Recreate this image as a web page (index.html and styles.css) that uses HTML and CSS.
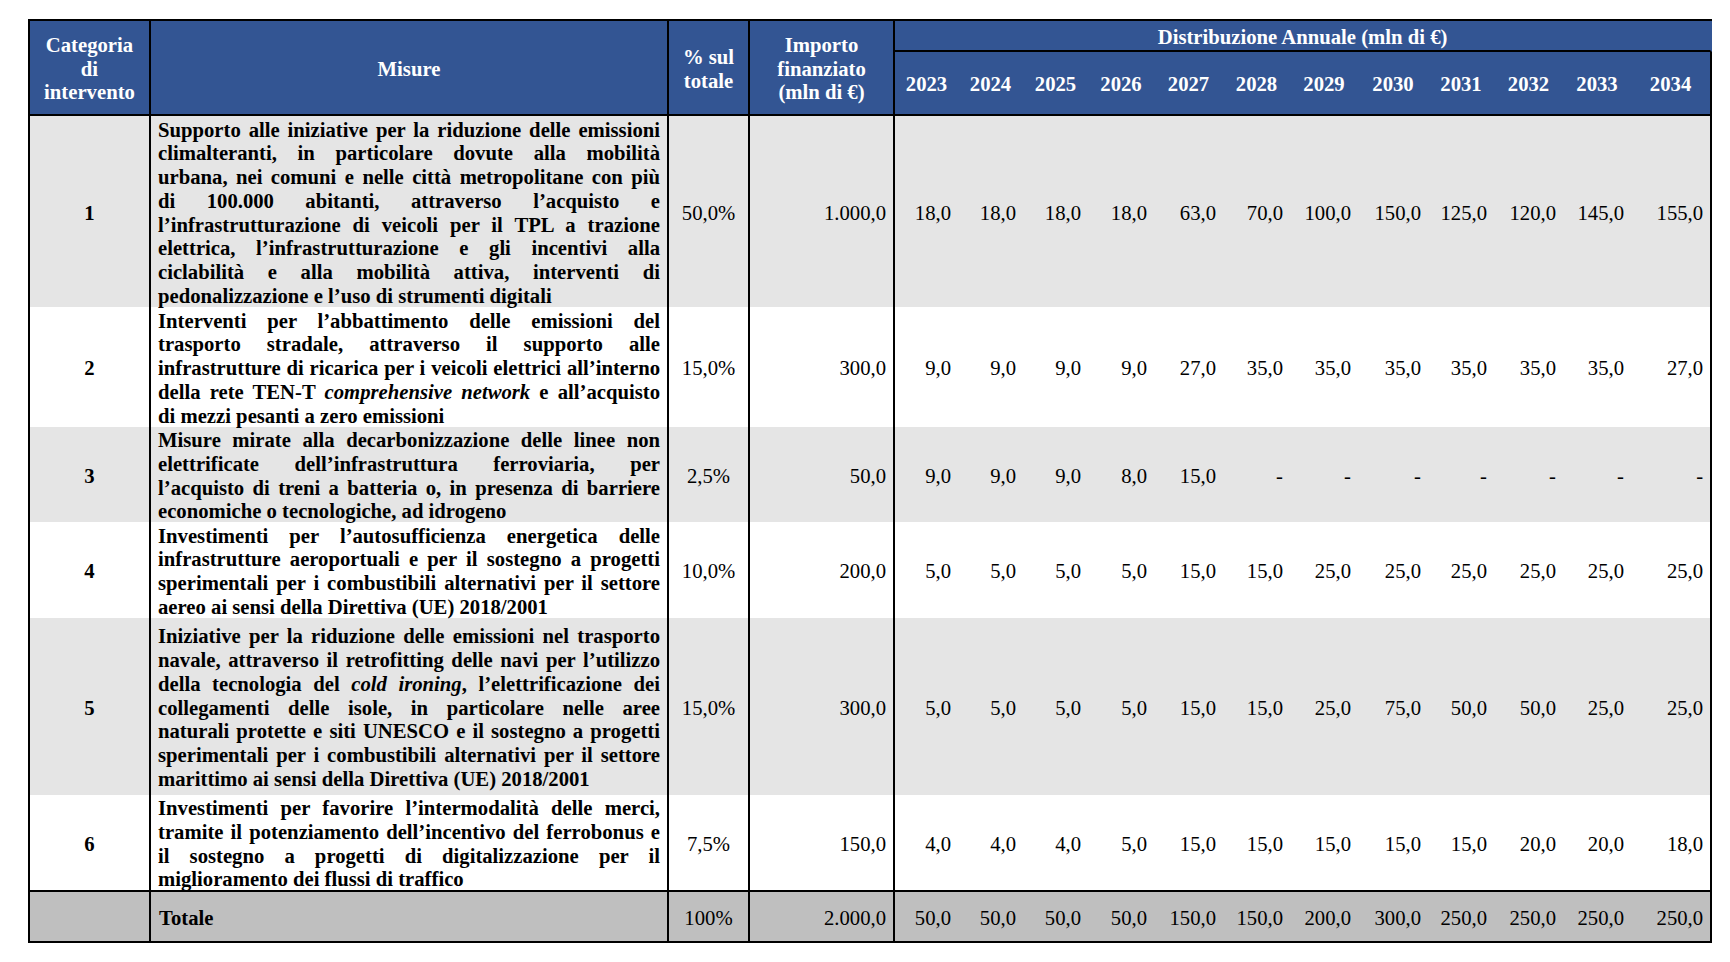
FILE: index.html
```html
<!DOCTYPE html>
<html lang="it">
<head>
<meta charset="utf-8">
<title>Distribuzione annuale delle misure</title>
<link rel="stylesheet" href="styles.css">
</head>
<body>
<table class="grid">
  <colgroup>
    <col class="c-cat"><col class="c-mis"><col class="c-pct"><col class="c-imp">
    <col class="y63"><col class="y65"><col class="y65"><col class="y66"><col class="y69"><col class="y67">
    <col class="y68"><col class="y70"><col class="y66"><col class="y69"><col class="y68"><col class="y81">
  </colgroup>
  <thead>
    <tr class="h-a">
      <th rowspan="2" class="sep">Categoria<br>di<br>intervento</th>
      <th rowspan="2" class="sep">Misure</th>
      <th rowspan="2" class="sep">% sul<br>totale</th>
      <th rowspan="2" class="sep">Importo<br>finanziato<br>(mln di €)</th>
      <th colspan="12" class="dist">Distribuzione Annuale (mln di €)</th>
    </tr>
    <tr class="h-b">
      <th>2023</th><th>2024</th><th>2025</th><th>2026</th><th>2027</th><th>2028</th>
      <th>2029</th><th>2030</th><th>2031</th><th>2032</th><th>2033</th><th class="last">2034</th>
    </tr>
  </thead>
  <tbody>
    <tr class="row shade r8">
      <td class="cat">1</td>
      <td class="mis">
        <span class="ln">Supporto alle iniziative per la riduzione delle emissioni</span>
        <span class="ln">climalteranti, in particolare dovute alla mobilità</span>
        <span class="ln">urbana, nei comuni e nelle città metropolitane con più</span>
        <span class="ln">di 100.000 abitanti, attraverso l’acquisto e</span>
        <span class="ln">l’infrastrutturazione di veicoli per il TPL a trazione</span>
        <span class="ln">elettrica, l’infrastrutturazione e gli incentivi alla</span>
        <span class="ln">ciclabilità e alla mobilità attiva, interventi di</span>
        <span class="ln end">pedonalizzazione e l’uso di strumenti digitali</span>
      </td>
      <td class="pct">50,0%</td>
      <td class="num sep">1.000,0</td>
      <td class="num">18,0</td><td class="num">18,0</td><td class="num">18,0</td><td class="num">18,0</td>
      <td class="num">63,0</td><td class="num">70,0</td><td class="num">100,0</td><td class="num">150,0</td>
      <td class="num">125,0</td><td class="num">120,0</td><td class="num">145,0</td><td class="num last">155,0</td>
    </tr>
    <tr class="row r5">
      <td class="cat">2</td>
      <td class="mis">
        <span class="ln">Interventi per l’abbattimento delle emissioni del</span>
        <span class="ln">trasporto stradale, attraverso il supporto alle</span>
        <span class="ln">infrastrutture di ricarica per i veicoli elettrici all’interno</span>
        <span class="ln">della rete TEN-T <em>comprehensive network</em> e all’acquisto</span>
        <span class="ln end">di mezzi pesanti a zero emissioni</span>
      </td>
      <td class="pct">15,0%</td>
      <td class="num sep">300,0</td>
      <td class="num">9,0</td><td class="num">9,0</td><td class="num">9,0</td><td class="num">9,0</td>
      <td class="num">27,0</td><td class="num">35,0</td><td class="num">35,0</td><td class="num">35,0</td>
      <td class="num">35,0</td><td class="num">35,0</td><td class="num">35,0</td><td class="num last">27,0</td>
    </tr>
    <tr class="row shade r4a">
      <td class="cat">3</td>
      <td class="mis">
        <span class="ln">Misure mirate alla decarbonizzazione delle linee non</span>
        <span class="ln">elettrificate dell’infrastruttura ferroviaria, per</span>
        <span class="ln">l’acquisto di treni a batteria o, in presenza di barriere</span>
        <span class="ln end">economiche o tecnologiche, ad idrogeno</span>
      </td>
      <td class="pct">2,5%</td>
      <td class="num sep">50,0</td>
      <td class="num">9,0</td><td class="num">9,0</td><td class="num">9,0</td><td class="num">8,0</td>
      <td class="num">15,0</td><td class="num">-</td><td class="num">-</td><td class="num">-</td>
      <td class="num">-</td><td class="num">-</td><td class="num">-</td><td class="num last">-</td>
    </tr>
    <tr class="row r4b">
      <td class="cat">4</td>
      <td class="mis">
        <span class="ln">Investimenti per l’autosufficienza energetica delle</span>
        <span class="ln">infrastrutture aeroportuali e per il sostegno a progetti</span>
        <span class="ln">sperimentali per i combustibili alternativi per il settore</span>
        <span class="ln end">aereo ai sensi della Direttiva (UE) 2018/2001</span>
      </td>
      <td class="pct">10,0%</td>
      <td class="num sep">200,0</td>
      <td class="num">5,0</td><td class="num">5,0</td><td class="num">5,0</td><td class="num">5,0</td>
      <td class="num">15,0</td><td class="num">15,0</td><td class="num">25,0</td><td class="num">25,0</td>
      <td class="num">25,0</td><td class="num">25,0</td><td class="num">25,0</td><td class="num last">25,0</td>
    </tr>
    <tr class="row shade r7">
      <td class="cat">5</td>
      <td class="mis">
        <span class="ln">Iniziative per la riduzione delle emissioni nel trasporto</span>
        <span class="ln">navale, attraverso il retrofitting delle navi per l’utilizzo</span>
        <span class="ln">della tecnologia del <em>cold ironing</em>, l’elettrificazione dei</span>
        <span class="ln">collegamenti delle isole, in particolare nelle aree</span>
        <span class="ln">naturali protette e siti UNESCO e il sostegno a progetti</span>
        <span class="ln">sperimentali per i combustibili alternativi per il settore</span>
        <span class="ln end">marittimo ai sensi della Direttiva (UE) 2018/2001</span>
      </td>
      <td class="pct">15,0%</td>
      <td class="num sep">300,0</td>
      <td class="num">5,0</td><td class="num">5,0</td><td class="num">5,0</td><td class="num">5,0</td>
      <td class="num">15,0</td><td class="num">15,0</td><td class="num">25,0</td><td class="num">75,0</td>
      <td class="num">50,0</td><td class="num">50,0</td><td class="num">25,0</td><td class="num last">25,0</td>
    </tr>
    <tr class="row r4c">
      <td class="cat">6</td>
      <td class="mis">
        <span class="ln">Investimenti per favorire l’intermodalità delle merci,</span>
        <span class="ln">tramite il potenziamento dell’incentivo del ferrobonus e</span>
        <span class="ln">il sostegno a progetti di digitalizzazione per il</span>
        <span class="ln end">miglioramento dei flussi di traffico</span>
      </td>
      <td class="pct">7,5%</td>
      <td class="num sep">150,0</td>
      <td class="num">4,0</td><td class="num">4,0</td><td class="num">4,0</td><td class="num">5,0</td>
      <td class="num">15,0</td><td class="num">15,0</td><td class="num">15,0</td><td class="num">15,0</td>
      <td class="num">15,0</td><td class="num">20,0</td><td class="num">20,0</td><td class="num last">18,0</td>
    </tr>
  </tbody>
  <tfoot>
    <tr class="total">
      <td class="cat"></td>
      <td class="mis label">Totale</td>
      <td class="pct">100%</td>
      <td class="num sep">2.000,0</td>
      <td class="num">50,0</td><td class="num">50,0</td><td class="num">50,0</td><td class="num">50,0</td>
      <td class="num">150,0</td><td class="num">150,0</td><td class="num">200,0</td><td class="num">300,0</td>
      <td class="num">250,0</td><td class="num">250,0</td><td class="num">250,0</td><td class="num last">250,0</td>
    </tr>
  </tfoot>
</table>
</body>
</html>
```

FILE: styles.css
```css
html, body {
  margin: 0;
  padding: 0;
  background: #ffffff;
}

body {
  padding: 19px 0 0 28px;
  font-family: "Liberation Serif", "Times New Roman", serif;
  font-size: 20.7px;
  line-height: 23.75px;
  color: #000000;
}

.grid {
  border-collapse: separate;
  border-spacing: 0;
  table-layout: fixed;
  width: 1684px;
  border-top: 2px solid #000;
  border-left: 2px solid #000;
  border-bottom: 2px solid #000;
}

.c-cat { width: 121px; }
.c-mis { width: 518px; }
.c-pct { width: 81px; }
.c-imp { width: 145px; }
.y63 { width: 63px; }
.y65 { width: 65px; }
.y66 { width: 66px; }
.y67 { width: 67px; }
.y68 { width: 68px; }
.y69 { width: 69px; }
.y70 { width: 70px; }
.y81 { width: 81px; }

th, td {
  box-sizing: border-box;
  padding: 4px 0 0 0;
  vertical-align: middle;
}

/* header */
thead th {
  background: #335593;
  color: #ffffff;
  font-weight: bold;
  text-align: center;
  padding: 4px 6px 0 6px;
  border-bottom: 2px solid #000;
}

thead th.sep {
  border-right: 2px solid #000;
}

.h-a { height: 31px; }
.h-b { height: 64px; }

thead th.dist {
  border-right: 2px solid #335593;
}

thead .h-b th {
  padding: 4px 0 0 0;
}

thead th.last {
  border-right: 2px solid #000;
}

/* body rows */
.r8 { height: 191px; }
.r5 { height: 120px; }
.r4a { height: 95px; }
.r4b { height: 96px; }
.r7 { height: 177px; }
.r4c { height: 95px; }

.shade td {
  background: #e5e5e5;
}

.cat {
  text-align: center;
  font-weight: bold;
  border-right: 2px solid #000;
}

.mis {
  font-weight: bold;
  padding: 0 7px;
  border-right: 2px solid #000;
}

.mis em {
  font-style: italic;
}

.ln {
  display: block;
  white-space: nowrap;
  text-align: justify;
  text-align-last: justify;
}

.ln:first-child {
  margin-top: 2px;
}

.ln.end {
  text-align: left;
  text-align-last: left;
  margin-bottom: -2px;
}

.pct {
  text-align: center;
  border-right: 2px solid #000;
}

.num {
  text-align: right;
  padding-right: 7px;
  white-space: nowrap;
}

.num.sep {
  border-right: 2px solid #000;
}

.num.last {
  border-right: 2px solid #000;
}

/* total row */
.total {
  height: 51px;
}

.total td {
  background: #bfbfbf;
  border-top: 2px solid #000;
}

.total .label {
  padding: 4px 0 0 8px;
}
```
